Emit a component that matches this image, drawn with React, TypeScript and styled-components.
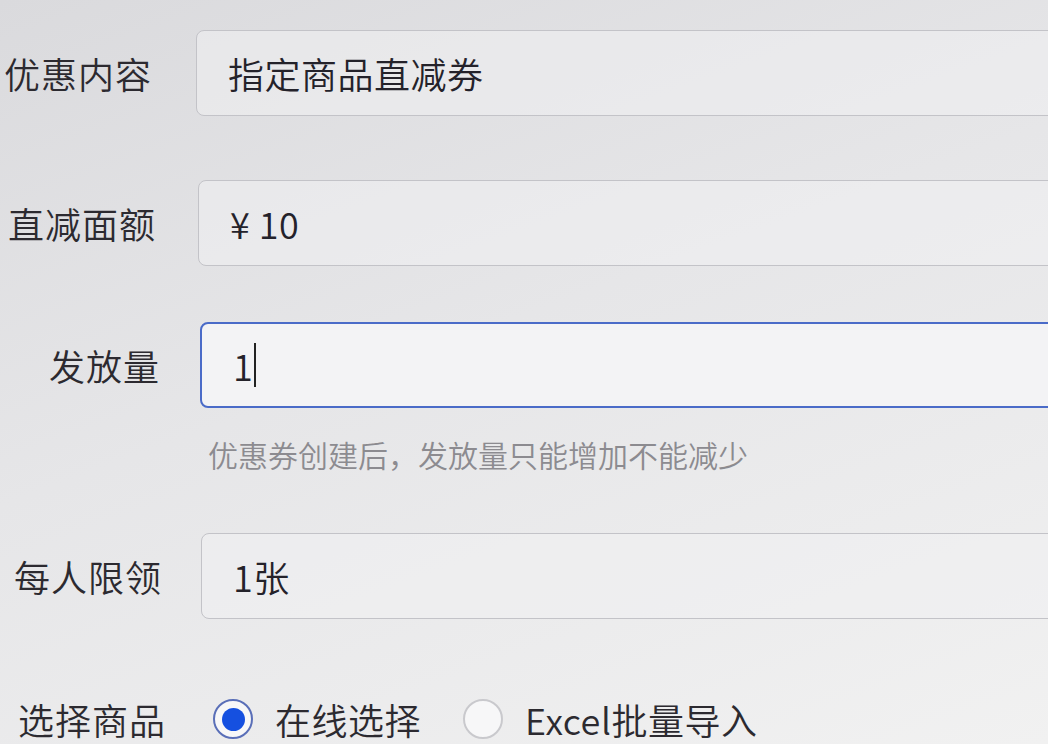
import React from "react";
import styled, { createGlobalStyle } from "styled-components";

const GlobalStyle = createGlobalStyle`
  html, body {
    margin: 0;
    padding: 0;
    overflow: hidden;
  }
  body {
    font-family: "Noto Sans CJK SC", "Noto Sans", sans-serif;
    background: linear-gradient(160deg, #dadadd 0%, #e6e6e8 45%, #f1f1f1 100%);
    width: 1048px;
    height: 744px;
  }
`;

const Page = styled.div`
  width: 1100px;
  height: 744px;
  padding-top: 30px;
  box-sizing: border-box;
  display: flex;
  flex-direction: column;
`;

const Row = styled.div<{ $gap: number }>`
  display: flex;
  align-items: center;
  margin-bottom: ${(p) => p.$gap}px;
`;

const Label = styled.div<{ $shift: number }>`
  width: ${(p) => 156 + p.$shift}px;
  flex-shrink: 0;
  text-align: right;
  font-size: 36px;
  font-weight: 350;
  color: #2c2a30;
  letter-spacing: 1px;
  padding-right: ${(p) => 42 - p.$shift / 2}px;
  box-sizing: content-box;
`;

const Field = styled.div<{ $focused?: boolean }>`
  flex: 1;
  height: 86px;
  box-sizing: border-box;
  border: ${(p) => (p.$focused ? "2px solid #4a6bc8" : "1.5px solid #c3c3c8")};
  border-radius: 8px;
  background: ${(p) => (p.$focused ? "#f3f3f5" : "rgba(240, 240, 242, 0.55)")};
  display: flex;
  align-items: center;
  padding-left: 31px;
  font-size: 36px;
  font-weight: 350;
  letter-spacing: 0.5px;
  color: #24222a;
`;

const Caret = styled.span`
  display: inline-block;
  width: 2px;
  height: 44px;
  background: #222;
  margin-left: 1px;
`;

const Hint = styled.div`
  margin-left: 208px;
  margin-top: 24px;
  margin-bottom: 57px;
  font-size: 30px;
  font-weight: 350;
  color: #8c8b90;
`;

const RadioGroup = styled.div`
  display: flex;
  align-items: center;
  gap: 22px;
  margin-left: 10px;
`;

const RadioCircle = styled.span<{ $checked?: boolean }>`
  width: 40px;
  height: 40px;
  border-radius: 50%;
  box-sizing: border-box;
  border: 2px solid ${(p) => (p.$checked ? "#5a6fb8" : "#c9c9cd")};
  background: #f7f7f8;
  display: flex;
  align-items: center;
  justify-content: center;
  &::after {
    content: "";
    width: 23px;
    height: 23px;
    border-radius: 50%;
    background: ${(p) => (p.$checked ? "#1550e0" : "transparent")};
  }
`;

const RadioText = styled.span`
  font-size: 36px;
  font-weight: 350;
  letter-spacing: 0.5px;
  color: #2c2a30;
  margin-right: 20px;
`;

export default function App() {
  return (
    <>
      <GlobalStyle />
      <Page>
        <Row $gap={64}>
          <Label $shift={-4}>优惠内容</Label>
          <Field>指定商品直减券</Field>
        </Row>
        <Row $gap={56}>
          <Label $shift={0}>直减面额</Label>
          <Field>¥ 10</Field>
        </Row>
        <Row $gap={0}>
          <Label $shift={4}>发放量</Label>
          <Field $focused>
            1<Caret />
          </Field>
        </Row>
        <Hint>优惠券创建后，发放量只能增加不能减少</Hint>
        <Row $gap={74}>
          <Label $shift={6}>每人限领</Label>
          <Field>1张</Field>
        </Row>
        <Row $gap={0}>
          <Label $shift={10}>选择商品</Label>
          <RadioGroup>
            <RadioCircle $checked />
            <RadioText>在线选择</RadioText>
            <RadioCircle />
            <RadioText>Excel批量导入</RadioText>
          </RadioGroup>
        </Row>
      </Page>
    </>
  );
}
